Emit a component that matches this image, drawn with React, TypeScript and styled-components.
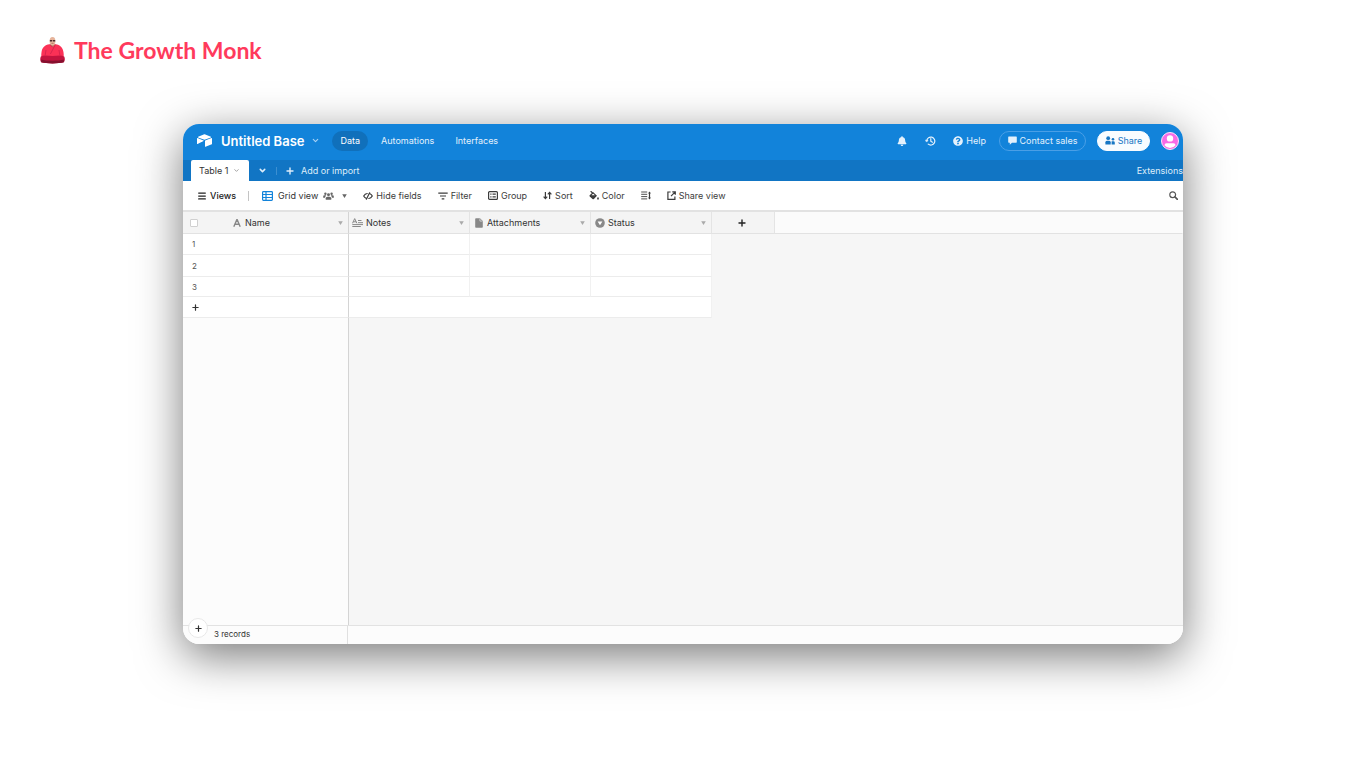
import React from "react";
import styled, { createGlobalStyle } from "styled-components";
import { SiAirtable } from "react-icons/si";
import { FaBell, FaQuestionCircle } from "react-icons/fa";
import { ChevronDown, Menu } from "lucide-react";

const GlobalStyle = createGlobalStyle`
  * { box-sizing: border-box; }
  body {
    margin: 0;
    background: #fff;
    color: #333;
    font: 400 9px/12px Inter, "Liberation Sans", sans-serif;
  }
  button {
    margin: 0;
    padding: 0;
    border: 0;
    background: none;
    color: inherit;
    font: inherit;
    cursor: pointer;
  }
  a { color: inherit; text-decoration: none; }
  svg { display: block; flex: none; }
`;

const Page = styled.div`
  min-height: 100vh;
  display: flex;
  flex-direction: column;
  padding: 36px 184px 125px 183px;
`;

const Brand = styled.header`
  display: flex;
  align-items: center;
  gap: 9px;
  height: 28px;
  margin: 0 0 60px -143px;
`;

const BrandName = styled.h1`
  margin: 0;
  color: #ff3a5c;
  font: 700 23px/28px Lato, sans-serif;
`;

const AppWindow = styled.main`
  flex: 1;
  min-height: 520px;
  display: flex;
  flex-direction: column;
  overflow: hidden;
  border-radius: 16px;
  background: #fff;
  box-shadow: 0 12px 46px rgba(0, 0, 0, 0.53);
`;

const TopBar = styled.div`
  display: flex;
  align-items: center;
  height: 36px;
  padding: 0 4px 3px 14px;
  background: #1283da;
  color: #e4f1fc;
`;

const BaseTitle = styled.button`
  display: flex;
  align-items: center;
  gap: 7px;
  margin: 0 12px 0 9px;
  color: #fff;
  font: 600 13px/18px Inter, sans-serif;

  svg { color: #a9d2f5; }
`;

const Nav = styled.nav`
  display: flex;
  gap: 5px;
`;

const NavLink = styled.a<{ $active?: boolean }>`
  padding: 4px 8px;
  border-radius: 10px;
  background: ${(p) => (p.$active ? "#1070bb" : "transparent")};
  color: ${(p) => (p.$active ? "#fff" : "inherit")};
  line-height: 12px;
`;

const TopActions = styled.div`
  display: flex;
  align-items: center;
  margin-left: auto;
`;

const IconButton = styled.button<{ $gap?: number }>`
  display: flex;
  align-items: center;
  gap: 3px;
  margin-right: ${(p) => p.$gap ?? 0}px;
`;

const Pill = styled.button<{ $solid?: boolean }>`
  display: flex;
  align-items: center;
  justify-content: center;
  gap: 3px;
  width: ${(p) => (p.$solid ? 53 : 87)}px;
  height: 20px;
  margin-right: 11px;
  border: 1px solid ${(p) => (p.$solid ? "#f8fcff" : "#4a9fe6")};
  border-radius: 10px;
  background: ${(p) => (p.$solid ? "#f8fcff" : "transparent")};
  color: ${(p) => (p.$solid ? "#1676c4" : "inherit")};
`;

const TabBar = styled.div`
  display: flex;
  align-items: stretch;
  height: 21px;
  padding-left: 8px;
  background: #1175c4;
  color: #deedfa;
`;

const TableTab = styled.button`
  display: flex;
  align-items: center;
  gap: 5px;
  width: 58px;
  padding-left: 8px;
  border-radius: 2px 2px 0 0;
  background: #fff;
  color: #333;

  svg { color: #999; }
`;

const TabAction = styled.button`
  display: flex;
  align-items: center;
  gap: 7px;
  padding: 0 9px;
`;

const TabDivider = styled.span`
  align-self: center;
  width: 1px;
  height: 8px;
  background: #3c8fd1;
`;

const Extensions = styled.a`
  align-self: center;
  margin: 0 0 0 auto;
`;

const Toolbar = styled.div`
  display: flex;
  align-items: center;
  gap: 16px;
  height: 31px;
  padding: 0 5px 0 14px;
  border-bottom: 2px solid #e2e2e2;
`;

const Tool = styled.button<{ $strong?: boolean }>`
  display: flex;
  align-items: center;
  gap: 3px;
  font-weight: ${(p) => (p.$strong ? 500 : 400)};
  color: ${(p) => (p.$strong ? "#222" : "#3c3c3c")};
`;

const ViewSwitcher = styled.div`
  display: flex;
  align-items: center;
  gap: 12px;
`;

const ViewName = styled.span`
  margin: 0 2px;
  color: #333;
`;

const ViewCaret = styled.span`
  margin-left: 5px;
`;

const ToolDivider = styled.span`
  width: 1px;
  height: 10px;
  margin-right: 1px;
  background: #c4c4c4;
`;

const SearchButton = styled.button`
  margin-left: auto;
  color: #555;
`;

const Grid = styled.table`
  width: 100%;
  table-layout: fixed;
  border-collapse: separate;
  border-spacing: 0;
`;

const HeadCell = styled.th<{ $primary?: boolean; $blank?: boolean }>`
  height: 22px;
  padding: 0 5px 0 ${(p) => (p.$primary ? 7 : 3)}px;
  border-right: 1px solid ${(p) => (p.$blank ? "transparent" : p.$primary ? "#d4d4d4" : "#e4e4e4")};
  border-bottom: 1px solid #e2e2e2;
  background: ${(p) => (p.$blank ? "#fbfbfb" : "#f4f4f4")};
  font-weight: 400;
  text-align: left;
`;

const Field = styled.div`
  display: flex;
  align-items: center;
  gap: 3px;
  height: 12px;
`;

const FieldIcon = styled.span`
  display: flex;
  justify-content: center;
  width: 11px;
  color: #888;
`;

const FieldMenu = styled.button`
  margin-left: auto;
`;

const AddField = styled.button`
  display: flex;
  justify-content: center;
  width: 100%;
  color: #222;
`;

const SelectAll = styled.input`
  appearance: none;
  width: 8px;
  height: 8px;
  margin: 0 30px 0 0;
  border: 1px solid #d0d0d0;
  border-radius: 1px;
  background: #fff;
`;

const Cell = styled.td<{ $height: number; $primary?: boolean; $outside?: boolean }>`
  height: ${(p) => p.$height}px;
  padding: 0 0 0 ${(p) => (p.$primary ? 9 : 0)}px;
  border-right: 1px solid
    ${(p) => (p.$primary ? "#d4d4d4" : p.$outside ? "transparent" : "#f1f1f1")};
  border-bottom: 1px solid ${(p) => (p.$outside ? "transparent" : "#ececec")};
  background: ${(p) => (p.$outside ? "#f6f6f6" : "#fff")};
`;

const RowNumber = styled.span`
  display: block;
  color: #555;
  font-size: 8px;
  line-height: 10px;
`;

const AddRecord = styled.button`
  display: block;
  color: #333;
`;

const Canvas = styled.div`
  flex: 1;
  display: flex;
  background: #f6f6f6;
`;

const PrimaryPane = styled.div`
  width: 166px;
  border-right: 1px solid #d4d4d4;
  background: #fcfcfc;
`;

const Footer = styled.footer`
  position: relative;
  display: flex;
  height: 19px;
  border-top: 1px solid #e2e2e2;
  background: #fcfcfc;
`;

const RecordCount = styled.div`
  width: 165px;
  padding: 3px 0 0 31px;
  border-right: 1px solid #e0e0e0;
  font-size: 8px;
  line-height: 10px;
`;

const FloatingAdd = styled.button`
  position: absolute;
  left: 5px;
  top: -8px;
  display: flex;
  align-items: center;
  justify-content: center;
  width: 20px;
  height: 20px;
  border: 1px solid #e8e8e8;
  border-radius: 50%;
  background: #fff;
`;

const MonkLogo = () => (
  <svg width="25" height="28" viewBox="0 0 25 28" aria-hidden="true">
    <path d="M9.8 8 15.2 8 15 10.5 12.5 13 10 10.5Z" fill="#b97a62" />
    <ellipse cx="12.5" cy="5.2" rx="2.9" ry="4.3" fill="#e6b49b" />
    <path d="M9.8 4h2.4v1.5H10zM12.8 4h2.4v1.5h-2.2z" fill="#4a2a2c" />
    <path d="M11.4 7.3h2.2" stroke="#a05b4d" strokeWidth=".7" />
    <path d="M9.5 8.2 12.5 11l3-2.8c4.600.6 7.300 3.200 8 8 .4 2.700.4 4.700-.6 5.800H2.100c-1-1.100-1-3.100-.6-5.800.7-4.800 3.400-7.400 8-8Z" fill="#fb3156" />
    <path d="m15.400 8.500-5 9.500M10 8.500l2.500 2.800M6 14l-.8 5M19 14l.8 5" fill="none" stroke="#c9204a" strokeWidth=".7" />
    <path d="M.8 20.500C4 18.800 8 20 12.500 20s8.500-1.200 11.700.5c1 2 .8 4.500-.4 5.800-4.800 1.500-17.800 1.500-22.600 0C0 25 0 22.500.8 20.500Z" fill="#c4143f" />
    <path d="M1.200 23.500c5 1.600 17.600 1.600 22.600 0v2.800c-4.800 1.500-17.800 1.500-22.600 0Z" fill="#85102e" />
  </svg>
);

const Plus = ({ size = 8 }: { size?: number }) => (
  <svg width={size} height={size} viewBox="0 0 8 8" aria-hidden="true">
    <path d="M4 1v6M1 4h6" stroke="currentColor" strokeWidth="1.400" strokeLinecap="round" />
  </svg>
);

const Caret = ({ color = "#aaa" }: { color?: string }) => (
  <svg width="5" height="4" viewBox="0 0 5 4" aria-hidden="true">
    <path d="M.2.3h4.600L2.500 3.900Z" fill={color} />
  </svg>
);

const HistoryIcon = () => (
  <svg width="11" height="10" viewBox="0 0 11 10" fill="none" stroke="currentColor" strokeWidth="1.200" strokeLinecap="round" strokeLinejoin="round" aria-hidden="true">
    <path d="M1.800 5A4 4 0 1 1 3.200 8.100" />
    <path d="M.5 4.200h2.600L1.800 5.800Z" fill="currentColor" strokeWidth=".5" />
    <path d="M5.800 2.700v2.500l1.700 1" />
  </svg>
);

const ChatIcon = () => (
  <svg width="9" height="9" viewBox="0 0 9 9" fill="currentColor" aria-hidden="true">
    <path d="M.8.5h7.400q.6 0 .6.6v5q0 .6-.6.6H4L1.800 8.700V6.700h-1q-.6 0-.6-.6v-5Q.2.5.8.5Z" />
  </svg>
);

const PeopleIcon = () => (
  <svg width="10" height="9" viewBox="0 0 10 9" fill="currentColor" aria-hidden="true">
    <circle cx="3.200" cy="2.200" r="1.900" />
    <path d="M.4 8.500V6.300Q.4 4.800 1.900 4.800h2.400q1.400 0 1.400 1.500v2.200Z" />
    <circle cx="8" cy="3.200" r="1.300" />
    <path d="M6.600 8.500V5.300h1.800q1.400 0 1.400 1.400v1.800Z" />
  </svg>
);

const Avatar = () => (
  <svg width="18" height="20" viewBox="0 0 18 20" role="img" aria-label="Account">
    <circle cx="9" cy="10" r="8.500" fill="#f76be6" stroke="#fbe4fa" />
    <circle cx="9" cy="7.400" r="3.200" fill="#fff" />
    <path d="M3.500 14.200q0-2 2-2h7q2 0 2 2Q12.500 17 9 17t-5.500-2.800Z" fill="#fff" />
  </svg>
);

const GridIcon = () => (
  <svg width="11" height="10" viewBox="0 0 11 10" fill="none" stroke="#1283da" strokeWidth="1.200" aria-hidden="true">
    <rect x=".6" y=".6" width="9.800" height="8.800" rx=".8" />
    <path d="M.6 3.500h9.800M.6 6.500h9.800M4 .6v8.800" />
  </svg>
);

const TeamIcon = () => (
  <svg width="11" height="8" viewBox="0 0 12 8" fill="#666" aria-hidden="true">
    <circle cx="6" cy="2.600" r="1.600" />
    <path d="M3 8V6.500Q3 4.700 4.800 4.700h2.400Q9 4.700 9 6.500V8Z" />
    <circle cx="2.600" cy="1.600" r="1.300" />
    <circle cx="9.400" cy="1.600" r="1.300" />
    <path d="M.2 6V4.600q0-1.300 1.300-1.300h2Q2.400 4.600 2.300 6ZM11.800 6V4.600q0-1.300-1.300-1.300h-2Q9.600 4.600 9.700 6Z" />
  </svg>
);

const HideIcon = () => (
  <svg width="10" height="8" viewBox="0 0 10 8" fill="none" stroke="currentColor" strokeWidth="1.200" strokeLinecap="round" strokeLinejoin="round" aria-hidden="true">
    <path d="M4.200 1.500Q2 1.700.7 4q.9 1.600 2.300 2.200M5.800 6.500Q8 6.300 9.300 4 8.400 2.400 7 1.800M6.600.8 3.400 7.200" />
  </svg>
);

const FilterIcon = () => (
  <svg width="10" height="8" viewBox="0 0 10 8" stroke="currentColor" strokeWidth="1.200" aria-hidden="true">
    <path d="M.3 1.200h9.400M2 4h6M3.700 6.800h2.600" />
  </svg>
);

const GroupIcon = () => (
  <svg width="10" height="9" viewBox="0 0 10 9" fill="none" stroke="currentColor" aria-hidden="true">
    <rect x=".6" y=".6" width="8.800" height="7.800" rx="1" strokeWidth="1.200" />
    <path d="M2.300 3.200h1.200M4.500 3.200h3.300M2.300 5.800h1.200M4.500 5.800h3.300" strokeWidth="1.200" />
  </svg>
);

const SortIcon = () => (
  <svg width="9" height="9" viewBox="0 0 9 9" fill="none" stroke="currentColor" strokeWidth="1.200" aria-hidden="true">
    <path d="M2.400 1v6.500M.6 5.700l1.800 1.900 1.800-1.900M6.600 8V1.500M4.800 3.300l1.800-1.900 1.800 1.900" />
  </svg>
);

const ColorIcon = () => (
  <svg width="10" height="9" viewBox="0 0 10 9" aria-hidden="true">
    <path d="M2 .5 4 2.500" fill="none" stroke="currentColor" strokeWidth="1.100" strokeLinecap="round" />
    <path d="M4 1.100 8 4.700 4.900 8q-.7.6-1.400 0L.7 5.400q-.6-.6 0-1.200ZM4.100 2.600 2.500 4.200h3.400Z" fill="currentColor" fillRule="evenodd" />
    <path d="M9 5.800q.9 1.300.9 1.900a.9.9 0 0 1-1.800 0q0-.6.9-1.900Z" fill="currentColor" />
  </svg>
);

const RowHeightIcon = () => (
  <svg width="10" height="9" viewBox="0 0 10 9" fill="none" stroke="currentColor" aria-hidden="true">
    <path d="M.2 1h6M.2 3.300h6M.2 5.600h6M.2 7.900h6" strokeWidth=".9" />
    <path d="M8.500 1v7" strokeWidth="1.200" />
    <path d="M7.100 2.400 8.500.5l1.400 1.900ZM7.100 6.500l1.400 1.900 1.400-1.900Z" fill="currentColor" stroke="none" />
  </svg>
);

const ShareViewIcon = () => (
  <svg width="9" height="9" viewBox="0 0 9 9" fill="none" stroke="currentColor" strokeWidth="1.200" aria-hidden="true">
    <path d="M3.600 1H.9v7.300h7V5.600M5.300.8h3v3M8.200.9 4 5.200" />
  </svg>
);

const SearchIcon = () => (
  <svg width="9" height="9" viewBox="0 0 9 9" fill="none" stroke="currentColor" aria-hidden="true">
    <circle cx="3.700" cy="3.700" r="2.900" strokeWidth="1.200" />
    <path d="m5.900 5.900 2.500 2.500" strokeWidth="1.600" strokeLinecap="round" />
  </svg>
);

const TextFieldIcon = () => (
  <svg width="8" height="8" viewBox="0 0 8 8" fill="none" stroke="currentColor" strokeWidth="1.400" aria-hidden="true">
    <path d="M.8 7.700 3.800.7h.4l3 7M1.900 5.300h4.200" />
  </svg>
);

const LongTextIcon = () => (
  <svg width="11" height="9" viewBox="0 0 11 9" fill="none" stroke="currentColor" strokeWidth="1" aria-hidden="true">
    <path d="M.5 5.300 2.700.6l2.200 4.700M1.300 3.800h2.800M6 2.500h3.500M6 4.700h5M.3 6.600H11M.3 8.500h8.500" />
  </svg>
);

const FileIcon = () => (
  <svg width="8" height="10" viewBox="0 0 8 10" aria-hidden="true">
    <path d="M1 .2h4L7.800 3v6q0 .8-.8.8H1q-.8 0-.8-.8V1Q.2.2 1 .2Z" fill="currentColor" />
    <path d="M4.900.6v2.500h2.500" fill="none" stroke="#f4f4f4" strokeWidth=".6" />
  </svg>
);

const SelectIcon = () => (
  <svg width="10" height="10" viewBox="0 0 10 10" aria-hidden="true">
    <circle cx="5" cy="5" r="4.800" fill="currentColor" />
    <path d="M2.600 3.500h4.800L5 7.200Z" fill="#fff" />
  </svg>
);

const fields = [
  { name: "Notes", icon: <LongTextIcon /> },
  { name: "Attachments", icon: <FileIcon /> },
  { name: "Status", icon: <SelectIcon /> },
];

const rows = [
  { id: 1, height: 21 },
  { id: 2, height: 22 },
  { id: 3, height: 20 },
];

export default function App() {
  return (
    <>
      <GlobalStyle />
      <Page>
        <Brand>
          <MonkLogo />
          <BrandName>The Growth Monk</BrandName>
        </Brand>
        <AppWindow>
          <TopBar>
            <SiAirtable size={15} color="#fff" />
            <BaseTitle>
              Untitled Base <ChevronDown size={9} strokeWidth={3} />
            </BaseTitle>
            <Nav>
              <NavLink href="#data" $active>Data</NavLink>
              <NavLink href="#automations">Automations</NavLink>
              <NavLink href="#interfaces">Interfaces</NavLink>
            </Nav>
            <TopActions>
              <IconButton $gap={18} aria-label="Notifications"><FaBell size={10} /></IconButton>
              <IconButton $gap={17} aria-label="History"><HistoryIcon /></IconButton>
              <IconButton $gap={13}><FaQuestionCircle size={10} />Help</IconButton>
              <Pill><ChatIcon />Contact sales</Pill>
              <Pill $solid><PeopleIcon />Share</Pill>
              <IconButton><Avatar /></IconButton>
            </TopActions>
          </TopBar>
          <TabBar>
            <TableTab>Table 1 <ChevronDown size={7} strokeWidth={3} /></TableTab>
            <TabAction aria-label="All tables"><ChevronDown size={9} strokeWidth={4} /></TabAction>
            <TabDivider />
            <TabAction><Plus />Add or import</TabAction>
            <Extensions href="#extensions">Extensions</Extensions>
          </TabBar>
          <Toolbar>
            <ViewSwitcher>
              <Tool $strong><Menu size={10} strokeWidth={3} />Views</Tool>
              <ToolDivider />
              <Tool>
                <GridIcon />
                <ViewName>Grid view</ViewName>
                <TeamIcon />
                <ViewCaret><Caret color="#666" /></ViewCaret>
              </Tool>
            </ViewSwitcher>
            <Tool><HideIcon />Hide fields</Tool>
            <Tool><FilterIcon />Filter</Tool>
            <Tool><GroupIcon />Group</Tool>
            <Tool><SortIcon />Sort</Tool>
            <Tool><ColorIcon />Color</Tool>
            <Tool aria-label="Row height"><RowHeightIcon /></Tool>
            <Tool><ShareViewIcon />Share view</Tool>
            <SearchButton aria-label="Search"><SearchIcon /></SearchButton>
          </Toolbar>
          <Grid>
            <colgroup>
              <col width="166" />
              <col width="121" />
              <col width="121" />
              <col width="121" />
              <col width="63" />
              <col />
            </colgroup>
            <thead>
              <tr>
                <HeadCell $primary>
                  <Field>
                    <SelectAll type="checkbox" aria-label="Select all records" />
                    <FieldIcon><TextFieldIcon /></FieldIcon>
                    Name
                    <FieldMenu aria-label="Name options"><Caret /></FieldMenu>
                  </Field>
                </HeadCell>
                {fields.map((f) => (
                  <HeadCell key={f.name}>
                    <Field>
                      <FieldIcon>{f.icon}</FieldIcon>
                      {f.name}
                      <FieldMenu aria-label={`${f.name} options`}><Caret /></FieldMenu>
                    </Field>
                  </HeadCell>
                ))}
                <HeadCell><AddField aria-label="Add field"><Plus /></AddField></HeadCell>
                <HeadCell $blank />
              </tr>
            </thead>
            <tbody>
              {rows.map((r) => (
                <tr key={r.id}>
                  <Cell $height={r.height} $primary>
                    <RowNumber>{r.id}</RowNumber>
                  </Cell>
                  <Cell $height={r.height} />
                  <Cell $height={r.height} />
                  <Cell $height={r.height} />
                  <Cell $height={r.height} $outside colSpan={2} />
                </tr>
              ))}
              <tr>
                <Cell $height={21} $primary>
                  <AddRecord aria-label="Add record"><Plus size={7} /></AddRecord>
                </Cell>
                <Cell $height={21} colSpan={3} />
                <Cell $height={21} $outside colSpan={2} />
              </tr>
            </tbody>
          </Grid>
          <Canvas><PrimaryPane /></Canvas>
          <Footer>
            <RecordCount>3 records</RecordCount>
            <FloatingAdd aria-label="Add record"><Plus size={7} /></FloatingAdd>
          </Footer>
        </AppWindow>
      </Page>
    </>
  );
}
